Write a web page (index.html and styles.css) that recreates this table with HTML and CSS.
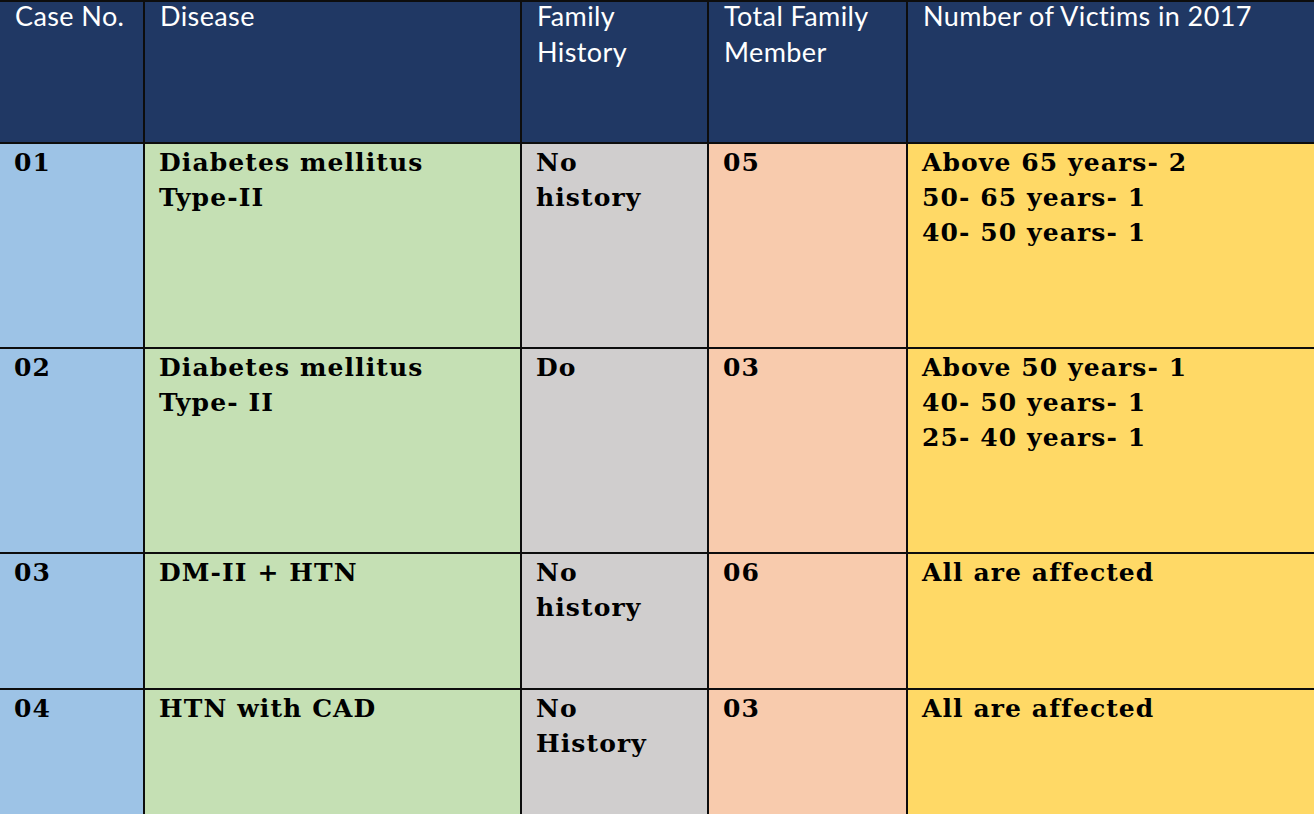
FILE: index.html
```html
<!DOCTYPE html>
<html>
<head>
<meta charset="utf-8">
<link rel="stylesheet" href="styles.css">
</head>
<body>
<table class="cases">
  <colgroup>
    <col class="c1"><col class="c2"><col class="c3"><col class="c4"><col class="c5">
  </colgroup>
  <thead>
    <tr class="head">
      <th><div class="hd">Case No.</div></th>
      <th><div class="hd">Disease</div></th>
      <th><div class="hd">Family<br>History</div></th>
      <th><div class="hd">Total Family<br>Member</div></th>
      <th><div class="hd">Number of Victims in 2017</div></th>
    </tr>
  </thead>
  <tbody>
    <tr class="r1">
      <td class="case">01</td>
      <td class="dis">Diabetes mellitus<br>Type-II</td>
      <td class="hist">No<br>history</td>
      <td class="tot">05</td>
      <td class="vic">Above 65 years- 2<br>50- 65 years- 1<br>40- 50 years- 1</td>
    </tr>
    <tr class="r2">
      <td class="case">02</td>
      <td class="dis">Diabetes mellitus<br>Type- II</td>
      <td class="hist">Do</td>
      <td class="tot">03</td>
      <td class="vic">Above 50 years- 1<br>40- 50 years- 1<br>25- 40 years- 1</td>
    </tr>
    <tr class="r3">
      <td class="case">03</td>
      <td class="dis">DM-II + HTN</td>
      <td class="hist">No<br>history</td>
      <td class="tot">06</td>
      <td class="vic">All are affected</td>
    </tr>
    <tr class="r4">
      <td class="case">04</td>
      <td class="dis">HTN with CAD</td>
      <td class="hist">No<br>History</td>
      <td class="tot">03</td>
      <td class="vic">All are affected</td>
    </tr>
  </tbody>
</table>
</body>
</html>
```

FILE: styles.css
```css
html, body {
  margin: 0;
  padding: 0;
  background: #ffffff;
  overflow: hidden;
}

.cases {
  border-collapse: collapse;
  table-layout: fixed;
  width: 1318px;
  margin: 0 0 0 -2px;
}

.c1 { width: 145px; }
.c2 { width: 377px; }
.c3 { width: 187px; }
.c4 { width: 199px; }
.c5 { width: 410px; }

.cases th,
.cases td {
  border: 2px solid #0d0d0d;
  vertical-align: top;
  text-align: left;
  padding: 0 8px 0 15px;
  box-sizing: border-box;
}

.head th {
  background: #203864;
  color: #ffffff;
  font-family: "Lato", "Open Sans", sans-serif;
  font-weight: 400;
  font-size: 27px;
  letter-spacing: 0.4px;
  line-height: 36px;
  height: 142px;
  padding-top: 0;
}

.hd {
  margin-top: -4px;
}

.cases td {
  font-family: "DejaVu Serif", "Liberation Serif", serif;
  font-weight: 700;
  font-size: 25px;
  letter-spacing: 1.1px;
  line-height: 35px;
  color: #000;
  padding-top: 1px;
  padding-left: 14px;
}

.r1 td, .r2 td { height: 205px; }
.r3 td { height: 136px; }
.r4 td { height: 140px; }

.case { background: #9dc3e6; }
.dis  { background: #c5e0b4; }
.hist { background: #d0cece; }
.tot  { background: #f8cbad; }
.vic  { background: #ffd966; }
```
